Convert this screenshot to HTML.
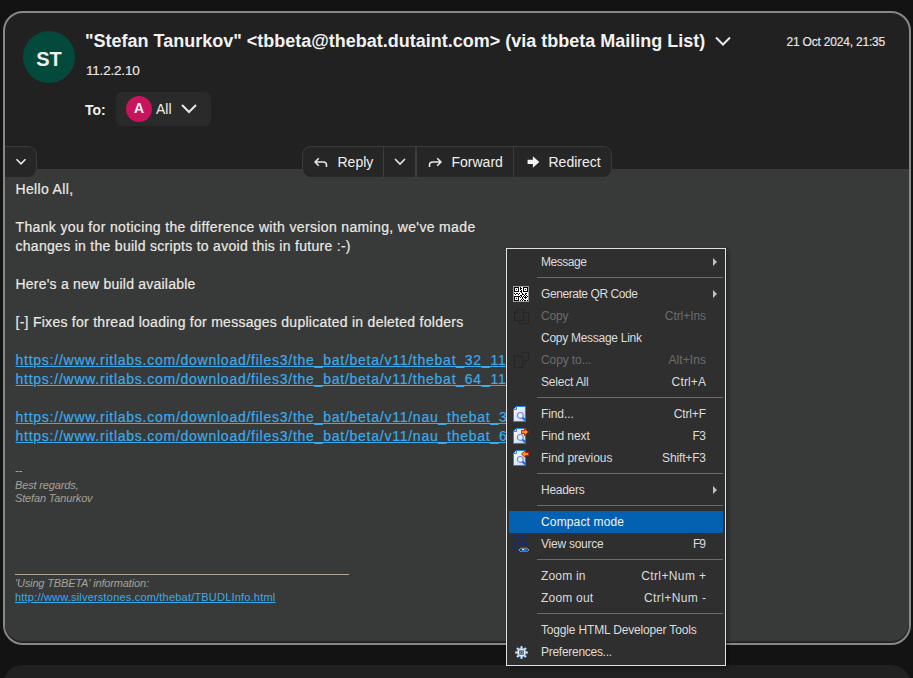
<!DOCTYPE html><html><head><meta charset="utf-8"><style>
*{margin:0;padding:0;box-sizing:border-box}
html,body{width:913px;height:678px;overflow:hidden;background:#131313;font-family:"Liberation Sans",sans-serif}
.a{position:absolute;white-space:pre}
#card{position:absolute;left:3px;top:11px;width:908px;height:634px;border:2px solid #878787;border-radius:20px;background:#212121}
#bodybg{position:absolute;left:5px;top:169px;width:904px;height:473px;background:#373a38;border-radius:0 0 18px 18px;border-bottom:1px solid #2a2a2a}
#card2{position:absolute;left:3px;top:665px;width:908px;height:40px;border-radius:20px;background:#212121}
.name{font-weight:bold;font-size:18px;line-height:20px;color:#f2f2f2}
.btxt{font-size:14px;line-height:19px;color:#ebe9e4;-webkit-text-stroke-width:0.2px}
.lnk{color:#3aabec;text-decoration:underline;text-underline-offset:1px}
.sig{font-size:11px;line-height:13px;color:#a6a29c;font-style:italic;letter-spacing:-0.15px}
#menu{position:absolute;left:506px;top:248px;width:220px;height:418px;border:1px solid #e2e2e2;background:#2f2f2f;box-shadow:2px 2px 4px rgba(0,0,0,0.4)}
.mi{position:absolute;left:2px;width:214px;height:22px;font-size:12px;line-height:22px;color:#dcdcdc}
.mi .t{position:absolute;left:32px;top:0;white-space:pre}
.mi .k{position:absolute;right:17px;top:0;white-space:pre}
.mi.dis{color:#6c6c6c}
.mi.hl{background:#0460b1;color:#f4f4f4}
.sep{position:absolute;left:30px;width:186px;height:1px;background:#6a6a6a}
.arr{position:absolute;right:6px;top:7px;width:0;height:0;border-top:4px solid transparent;border-bottom:4px solid transparent;border-left:4.5px solid #c0c0c0}
.ic{position:absolute;left:4px;top:3px;width:16px;height:16px}
.btn{position:absolute;top:146px;height:32px;background:#262626;border:1px solid #3a3a3a}
</style></head><body>
<div id="card"></div><div id="bodybg"></div><div id="card2"></div>
<div class="a" style="left:23px;top:31px;width:52px;height:52px;border-radius:50%;background:#034a3c;color:#f0f0f0;font-weight:bold;font-size:20px;line-height:57px;text-align:center">ST</div>
<div class="a name" style="left:85px;top:30.7px">"Stefan Tanurkov" &lt;tbbeta@thebat.dutaint.com&gt; (via tbbeta Mailing List)</div>
<svg class="a" style="left:714px;top:35px" width="18" height="12" viewBox="0 0 18 12"><path d="M2 2.5 L9 9.5 L16 2.5" fill="none" stroke="#e8e8e8" stroke-width="2"/></svg>
<div class="a" style="left:786.5px;top:34.6px;font-size:12px;line-height:14px;color:#e8e8e8;letter-spacing:-0.2px;-webkit-text-stroke-width:0.15px">21 Oct 2024, 21:35</div>
<div class="a" style="left:86px;top:63.1px;font-size:13.5px;line-height:16px;color:#e8e8e8;letter-spacing:-0.2px;-webkit-text-stroke-width:0.15px">11.2.2.10</div>
<div class="a" style="left:85px;top:101.9px;font-size:14px;line-height:16px;color:#f0f0f0;font-weight:bold">To:</div>
<div class="a" style="left:116px;top:92px;width:95px;height:34px;border-radius:6px;background:#2a2a2a"></div>
<div class="a" style="left:126px;top:96px;width:26px;height:26px;border-radius:50%;background:#c8135e;color:#f4f4f4;font-weight:bold;font-size:14px;line-height:24px;text-align:center">A</div>
<div class="a" style="left:156px;top:101.4px;font-size:14px;line-height:16px;color:#ececec">All</div>
<svg class="a" style="left:180px;top:102px" width="18" height="12" viewBox="0 0 18 12"><path d="M2 3 L9 10 L16 3" fill="none" stroke="#e8e8e8" stroke-width="2"/></svg>
<div class="a" style="left:5px;top:146px;width:32px;height:32px;background:#262626;border:1px solid #3a3a3a;border-left:none;border-radius:0 9px 9px 0"></div>
<svg class="a" style="left:15px;top:158px" width="12" height="8" viewBox="0 0 12 8"><path d="M1.5 1.3 L6 5.8 L10.5 1.3" fill="none" stroke="#e8e8e8" stroke-width="1.6"/></svg>
<div class="a" style="left:302px;top:146px;width:82px;height:32px;background:#262626;border:1px solid #3b3b3b;border-radius:9px 0 0 9px"></div>
<div class="a" style="left:383px;top:146px;width:33px;height:32px;background:#262626;border:1px solid #3b3b3b"></div>
<div class="a" style="left:416px;top:146px;width:98px;height:32px;background:#262626;border:1px solid #3b3b3b"></div>
<div class="a" style="left:513px;top:146px;width:99px;height:32px;background:#262626;border:1px solid #3b3b3b;border-radius:0 9px 9px 0"></div>
<div class="a" style="left:337.5px;top:154.1px;font-size:14px;line-height:16px;color:#f0f0f0">Reply</div>
<div class="a" style="left:451.5px;top:154.1px;font-size:14px;line-height:16px;color:#f0f0f0">Forward</div>
<div class="a" style="left:548.5px;top:154.1px;font-size:14px;line-height:16px;color:#f0f0f0">Redirect</div>
<svg class="a" style="left:314px;top:154px" width="16" height="16" viewBox="0 0 16 16"><path d="M4.8 4.3 L1.1 8 L4.8 11.7 M1.3 8 H9.3 Q12.5 8 12.5 11 V13" fill="none" stroke="#e6e6e6" stroke-width="1.6"/></svg>
<svg class="a" style="left:393px;top:157px" width="14" height="9" viewBox="0 0 14 9"><path d="M2 2 L7 7 L12 2" fill="none" stroke="#e6e6e6" stroke-width="1.6"/></svg>
<svg class="a" style="left:427px;top:154px" width="16" height="16" viewBox="0 0 16 16"><path d="M10.2 4.3 L13.9 8 L10.2 11.7 M13.7 8 H5.7 Q2.5 8 2.5 11 V13" fill="none" stroke="#e6e6e6" stroke-width="1.6"/></svg>
<svg class="a" style="left:526px;top:154px" width="16" height="16" viewBox="0 0 16 16"><path d="M1.6 5.8 H6.9 V2.3 L13.3 8 L6.9 13.7 V10 H1.6 Z" fill="#f4f4f4"/></svg>
<div class="a btxt" style="left:15.5px;top:180.3px;letter-spacing:0.34px">Hello All,</div>
<div class="a btxt" style="left:15.5px;top:218.3px;letter-spacing:0.35px">Thank you for noticing the difference with version naming, we've made</div>
<div class="a btxt" style="left:15.5px;top:237.3px;letter-spacing:0.29px">changes in the build scripts to avoid this in future :-)</div>
<div class="a btxt" style="left:15.5px;top:275.3px;letter-spacing:0.22px">Here's a new build available</div>
<div class="a btxt" style="left:15.5px;top:313.3px;letter-spacing:0.27px">[-] Fixes for thread loading for messages duplicated in deleted folders</div>
<div class="a btxt lnk" style="left:15.5px;top:351.3px;letter-spacing:0.75px">https://www.ritlabs.com/download/files3/the_bat/beta/v11/thebat_32_11.9.0.10.exe</div>
<div class="a btxt lnk" style="left:15.5px;top:370.3px;letter-spacing:0.75px">https://www.ritlabs.com/download/files3/the_bat/beta/v11/thebat_64_11.9.0.10.exe</div>
<div class="a btxt lnk" style="left:15.5px;top:408.3px;letter-spacing:0.75px">https://www.ritlabs.com/download/files3/the_bat/beta/v11/nau_thebat_32_11.9.0.10.exe</div>
<div class="a btxt lnk" style="left:15.5px;top:427.3px;letter-spacing:0.75px">https://www.ritlabs.com/download/files3/the_bat/beta/v11/nau_thebat_64_11.9.0.10.exe</div>
<div class="a sig" style="left:15px;top:464.2px">--</div>
<div class="a sig" style="left:15px;top:478.7px">Best regards,</div>
<div class="a sig" style="left:15px;top:492.2px">Stefan Tanurkov</div>
<div class="a" style="left:15px;top:574px;width:334px;height:1px;background:#aea595"></div>
<div class="a sig" style="left:15px;top:576.7px">'Using TBBETA' information:</div>
<div class="a sig lnk" style="left:15px;top:591.1px;font-style:normal;letter-spacing:0.2px;text-underline-offset:1px;color:#3aabec">http://www.silverstones.com/thebat/TBUDLInfo.html</div>
<div id="menu">
<div class="mi" style="top:2px"><span class="t" style="letter-spacing:-0.45px">Message</span><span class="arr"></span></div>
<div class="sep" style="top:28px"></div>
<div class="mi" style="top:34px"><span class="t" style="letter-spacing:-0.43px">Generate QR Code</span><span class="arr"></span><svg class="ic" viewBox="0 0 16 16" shape-rendering="crispEdges"><rect x="0" y="0" width="16" height="16" fill="#a0a0a0"/><rect x="1" y="1" width="14" height="14" fill="#fff"/><path d="M1 1h5v5h-5z M2 2v3h3v-3z M3 3h1v1h-1z M10 1h5v5h-5z M11 2v3h3v-3z M12 3h1v1h-1z M1 10h5v5h-5z M2 11v3h3v-3z M3 12h1v1h-1z M7 1h1v1h-1z M7 2h1v1h-1z M8 2h1v1h-1z M7 3h1v1h-1z M8 4h1v1h-1z M7 5h1v1h-1z M8 5h1v1h-1z M8 6h1v1h-1z M9 7h1v1h-1z M1 7h1v1h-1z M3 7h1v1h-1z M4 7h1v1h-1z M2 8h1v1h-1z M5 8h1v1h-1z M6 7h1v1h-1z M9 8h1v1h-1z M10 8h1v1h-1z M12 7h1v1h-1z M13 7h1v1h-1z M12 8h1v1h-1z M7 9h1v1h-1z M8 9h1v1h-1z M11 9h1v1h-1z M13 9h1v1h-1z M8 10h1v1h-1z M10 10h1v1h-1z M12 10h1v1h-1z M7 11h1v1h-1z M9 11h1v1h-1z M11 11h1v1h-1z M12 11h1v1h-1z M13 11h1v1h-1z M9 12h1v1h-1z M10 13h1v1h-1z M12 12h1v1h-1z M8 13h1v1h-1z M7 14h1v1h-1z M9 14h1v1h-1z M11 14h1v1h-1z M12 14h1v1h-1z M14 14h1v1h-1z M14 10h1v1h-1z M6 10h1v1h-1z" fill="#000" fill-rule="evenodd"/></svg></div>
<div class="mi dis" style="top:56px"><span class="t" style="letter-spacing:-0.2px">Copy</span><span class="k" style="letter-spacing:-0.07px;margin-right:0.07px">Ctrl+Ins</span><svg class="ic" viewBox="0 0 16 16"><path d="M4.5 1.5H10.5V12.5H1.5V4.5Z M1.5 4.5H4.5V1.5" fill="none" stroke="#252525" stroke-width="1"/><path d="M10.5 4.5H15.5V15.5H6.5V12.5" fill="none" stroke="#252525" stroke-width="1"/></svg></div>
<div class="mi" style="top:78px"><span class="t" style="letter-spacing:-0.28px">Copy Message Link</span></div>
<div class="mi dis" style="top:100px"><span class="t" style="letter-spacing:-0.1px">Copy to...</span><span class="k" style="letter-spacing:0.07px;margin-right:-0.07px">Alt+Ins</span><svg class="ic" viewBox="0 0 16 16"><path d="M8.5 0.5H15.5V8.5H10.5" fill="none" stroke="#252525"/><path d="M1.5 4.5H9.5V15.5H1.5Z M1.5 4.5L0 3 M4 3.5L6 2" fill="none" stroke="#252525"/><path d="M11 10h2v1h-2z M11 12.5h1v1h-1z" fill="#252525"/></svg></div>
<div class="mi" style="top:122px"><span class="t" style="letter-spacing:-0.18px">Select All</span><span class="k" style="letter-spacing:0.14px;margin-right:-0.14px">Ctrl+A</span></div>
<div class="sep" style="top:148px"></div>
<div class="mi" style="top:154px"><span class="t" style="letter-spacing:-0.1px">Find...</span><span class="k" style="letter-spacing:-0.14px;margin-right:0.14px">Ctrl+F</span><svg class="ic" viewBox="0 0 16 16"><defs><linearGradient id="g1" x1="0" y1="0" x2="1" y2="1"><stop offset="0" stop-color="#ffffff"/><stop offset="1" stop-color="#b5d4f4"/></linearGradient></defs><path d="M3.5 0.5H12.5V15.5H0.5V3.5Z" fill="url(#g1)" stroke="#1e82e6"/><path d="M0.5 3.5H3.5V0.5" fill="#e8f2fc" stroke="#1e82e6"/><circle cx="7.3" cy="9.4" r="2.9" fill="#d6f7fb" stroke="#8d80c6" stroke-width="1.2"/><path d="M9.6 11.7L12.6 14.6" stroke="#1f66d0" stroke-width="2"/></svg></div>
<div class="mi" style="top:176px"><span class="t" style="letter-spacing:-0.07px">Find next</span><span class="k" style="letter-spacing:-0.6px;margin-right:0.6px">F3</span><svg class="ic" viewBox="0 0 16 16"><defs><linearGradient id="g2" x1="0" y1="0" x2="1" y2="1"><stop offset="0" stop-color="#ffffff"/><stop offset="1" stop-color="#b5d4f4"/></linearGradient></defs><path d="M3.5 0.5H12.5V15.5H0.5V3.5Z" fill="url(#g2)" stroke="#1e82e6"/><path d="M0.5 3.5H3.5V0.5" fill="#e8f2fc" stroke="#1e82e6"/><circle cx="7.3" cy="9.4" r="2.9" fill="#d6f7fb" stroke="#8d80c6" stroke-width="1.2"/><path d="M9.6 11.7L12.6 14.6" stroke="#1f66d0" stroke-width="2"/><path d="M8.5 2.5H11.5V0.5L15.5 4L11.5 7.5V5.5H8.5Z" fill="#ff9428" stroke="#c42000" stroke-width="1" stroke-linejoin="round"/></svg></div>
<div class="mi" style="top:198px"><span class="t" style="letter-spacing:-0.05px">Find previous</span><span class="k" style="letter-spacing:-0.16px;margin-right:0.16px">Shift+F3</span><svg class="ic" viewBox="0 0 16 16"><defs><linearGradient id="g3" x1="0" y1="0" x2="1" y2="1"><stop offset="0" stop-color="#ffffff"/><stop offset="1" stop-color="#b5d4f4"/></linearGradient></defs><path d="M3.5 0.5H12.5V15.5H0.5V3.5Z" fill="url(#g3)" stroke="#1e82e6"/><path d="M0.5 3.5H3.5V0.5" fill="#e8f2fc" stroke="#1e82e6"/><circle cx="7.3" cy="9.4" r="2.9" fill="#d6f7fb" stroke="#8d80c6" stroke-width="1.2"/><path d="M9.6 11.7L12.6 14.6" stroke="#1f66d0" stroke-width="2"/><path d="M15.5 2.5H12.5V0.5L8.5 4L12.5 7.5V5.5H15.5Z" fill="#ff9428" stroke="#c42000" stroke-width="1" stroke-linejoin="round"/></svg></div>
<div class="sep" style="top:224px"></div>
<div class="mi" style="top:230px"><span class="t" style="letter-spacing:-0.27px">Headers</span><span class="arr"></span></div>
<div class="sep" style="top:256px"></div>
<div class="mi hl" style="top:262px"><span class="t" style="letter-spacing:0.15px">Compact mode</span></div>
<div class="mi" style="top:284px"><span class="t" style="letter-spacing:-0.25px">View source</span><span class="k" style="letter-spacing:-0.9px;margin-right:0.9px">F9</span><svg class="ic" viewBox="0 0 16 16" shape-rendering="crispEdges"><path d="M0 0h3v4h-3z M1 1v2h1v-2z M4 0h2v3h1v1h-3v-1h1v-2h-1z M8 0h2v3h1v1h-3v-1h1v-2h-1z M12 0h3v4h-3z M13 1v2h1v-2z M0 6h2v3h1v1h-3v-1h1v-2h-1z M4 6h3v4h-3z M5 7v2h1v-2z M8 6h2v3h1v1h-3v-1h1v-2h-1z M12 6h2v3h1v1h-3v-1h1v-2h-1z M0 12h3v4h-3z M1 13v2h1v-2z M4 12h2v3h1v1h-3v-1h1v-2h-1z" fill="#0a2c8c" fill-rule="evenodd"/><path d="M5.8 14L8 12.2H13.8L16 14L13.8 15.8H8Z" fill="#2f2f2f" stroke="#9fb3c8" stroke-width="0.8" shape-rendering="auto"/><rect x="8.6" y="12.8" width="5" height="2.6" fill="#1a6fe0"/><rect x="8.6" y="12.8" width="2" height="1" fill="#ffffff"/></svg></div>
<div class="sep" style="top:310px"></div>
<div class="mi" style="top:316px"><span class="t" style="letter-spacing:0.18px">Zoom in</span><span class="k" style="letter-spacing:0.38px;margin-right:-0.38px">Ctrl+Num +</span></div>
<div class="mi" style="top:338px"><span class="t" style="letter-spacing:0.21px">Zoom out</span><span class="k" style="letter-spacing:0.41px;margin-right:-0.41px">Ctrl+Num -</span></div>
<div class="sep" style="top:364px"></div>
<div class="mi" style="top:370px"><span class="t" style="letter-spacing:-0.17px">Toggle HTML Developer Tools</span></div>
<div class="mi" style="top:392px"><span class="t" style="letter-spacing:-0.28px">Preferences...</span><svg class="ic" viewBox="0 0 16 16"><g stroke="#6f93b5" stroke-width="2.6" stroke-linecap="butt"><path d="M8.5 2v13 M2 8.5h13 M3.9 3.9l9.2 9.2 M13.1 3.9l-9.2 9.2"/></g><g stroke="#eef5fb" stroke-width="1.3"><path d="M8.5 2.6v11.8 M2.6 8.5h11.8 M4.3 4.3l8.4 8.4 M12.7 4.3l-8.4 8.4"/></g><circle cx="8.5" cy="8.5" r="4.2" fill="#dfeaf4" stroke="#9fbcd6" stroke-width="0.8"/><rect x="6.3" y="6.3" width="4.4" height="4.4" fill="#2f4f6e"/><rect x="7.3" y="7.3" width="2.4" height="2.4" fill="#b8b2a8"/><rect x="8" y="8" width="1" height="1" fill="#222"/></svg></div>
</div>
</body></html>
